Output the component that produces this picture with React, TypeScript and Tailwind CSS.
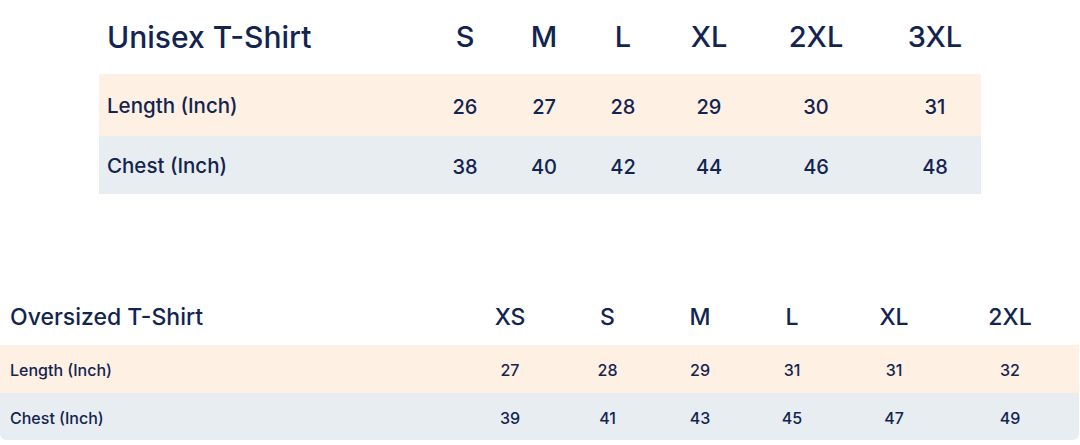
const unisex = {
  title: "Unisex T-Shirt",
  sizes: ["S", "M", "L", "XL", "2XL", "3XL"],
  rows: [
    { label: "Length (Inch)", values: [26, 27, 28, 29, 30, 31] },
    { label: "Chest (Inch)", values: [38, 40, 42, 44, 46, 48] },
  ],
};

const oversized = {
  title: "Oversized T-Shirt",
  sizes: ["XS", "S", "M", "L", "XL", "2XL"],
  rows: [
    { label: "Length (Inch)", values: [27, 28, 29, 31, 31, 32] },
    { label: "Chest (Inch)", values: [39, 41, 43, 45, 47, 49] },
  ],
};

const rowBg = ["bg-[#fff0e4]", "bg-[#e8edf2]"];

export default function App() {
  return (
    <div className="h-[445px] w-[1080px] overflow-hidden bg-white font-['Inter',sans-serif] font-medium text-[#12244f]">
      {/* unisex */}
      <div className="ml-[99px] w-[882px]">
        <div className="grid h-[74px] grid-cols-[327px_78px_80px_78px_94px_120px_1fr] items-center">
          <div className="pl-2 text-[30px]">{unisex.title}</div>
          {unisex.sizes.map((s, i) => (
            <div key={s} className={`text-center text-[29px] ${i === 5 ? "pl-[13px]" : ""}`}>
              {s}
            </div>
          ))}
        </div>
        {unisex.rows.map((r, ri) => (
          <div
            key={r.label}
            className={`grid grid-cols-[327px_78px_80px_78px_94px_120px_1fr] items-center pt-[3px] ${rowBg[ri]} ${ri === 0 ? "h-[62px]" : "h-[58px]"}`}
          >
            <div className="pl-2 text-[20.5px]">{r.label}</div>
            {r.values.map((v, i) => (
              <div key={i} className={`text-center text-[20px] ${i === 5 ? "pl-[13px]" : ""}`}>
                {v}
              </div>
            ))}
          </div>
        ))}
      </div>

      {/* oversized */}
      <div className="mt-[96px] w-[1079px] overflow-hidden rounded-b-md">
        <div className="grid h-[55px] grid-cols-[460px_100px_95px_90px_94px_110px_1fr] items-center">
          <div className="pl-[10px] text-[23px]">{oversized.title}</div>
          {oversized.sizes.map((s, i) => (
            <div key={s} className={`text-center text-[23px] ${i === 5 ? "pr-[8px]" : ""}`}>
              {s}
            </div>
          ))}
        </div>
        {oversized.rows.map((r, ri) => (
          <div
            key={r.label}
            className={`grid grid-cols-[460px_100px_95px_90px_94px_110px_1fr] items-center pt-[2px] ${rowBg[ri]} ${ri === 0 ? "h-[48px]" : "h-[47px]"}`}
          >
            <div className="pl-[10px] text-[16px]">{r.label}</div>
            {r.values.map((v, i) => (
              <div key={i} className={`text-center text-[16px] ${i === 5 ? "pr-[8px]" : ""}`}>
                {v}
              </div>
            ))}
          </div>
        ))}
      </div>
    </div>
  );
}
